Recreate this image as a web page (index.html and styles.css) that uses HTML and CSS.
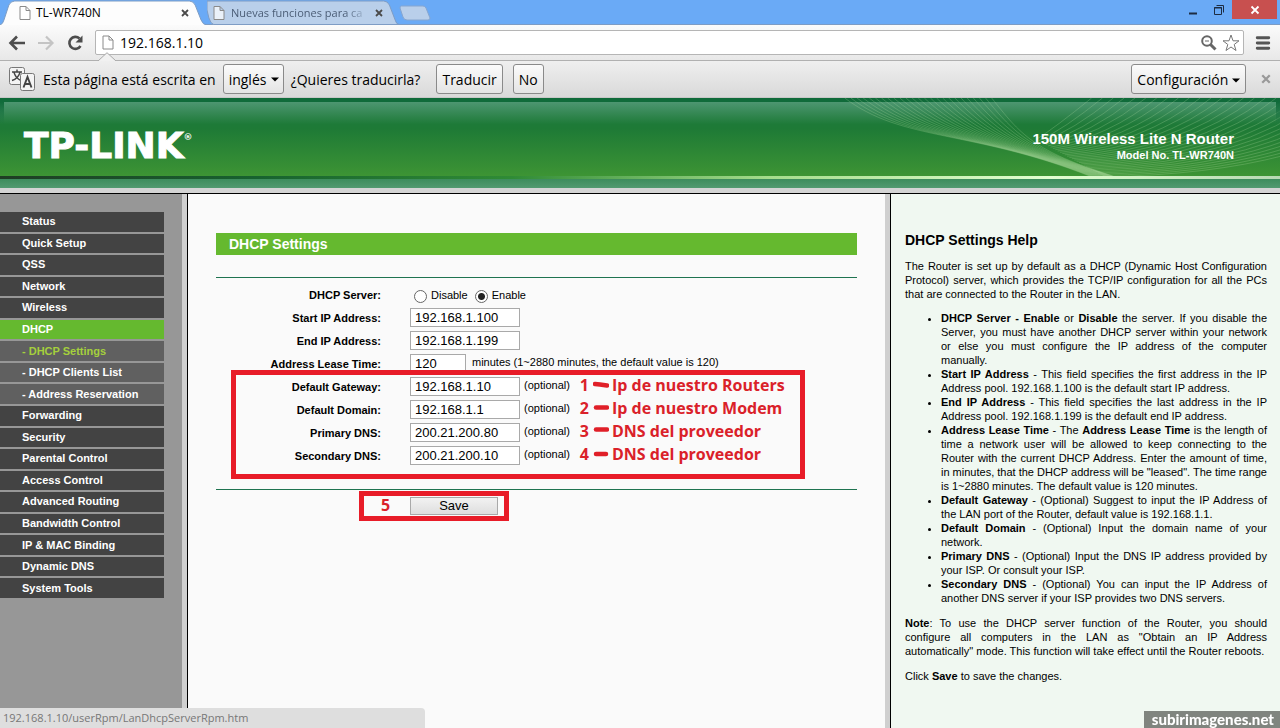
FILE: index.html
```html
<!DOCTYPE html>
<html lang="es">
<head>
<meta charset="utf-8">
<title>TL-WR740N</title>
<link rel="stylesheet" href="styles.css">
</head>
<body>
<svg class="defs" aria-hidden="true">
  <symbol id="page" viewBox="0 0 12 14"><path d="M1 .5h6l4 4v9H1zM7 .5v4h4" fill="#fff" fill-opacity=".7" stroke="#8a8a8a"/></symbol>
  <symbol id="x" viewBox="0 0 8 8"><path d="M1 1l6 6M7 1L1 7" fill="none" stroke="currentColor" stroke-width="1.8"/></symbol>
  <symbol id="caret" viewBox="0 0 8 5"><path d="M0 .5h8l-4 4z"/></symbol>
</svg>

<header class="titlebar">
  <div class="tab tab-active">
    <svg class="tab-shape" viewBox="0 0 210 25" preserveAspectRatio="none"><path d="M0 25Q3 24 4 20L9 5Q11 1 15 1H192Q196 1 198 5L204 20Q206 25 210 25" fill="#fdfdfd" stroke="#7d9cc4"/></svg>
    <svg class="tab-icon"><use href="#page"/></svg>
    <span class="tab-title">TL-WR740N</span>
    <button class="tab-close" aria-label="Cerrar pestaña"><svg><use href="#x"/></svg></button>
  </div>
  <div class="tab tab-back">
    <svg class="tab-shape" viewBox="0 0 200 25" preserveAspectRatio="none"><path d="M0 1H184Q188 1 190 5L196 20Q197 24 200 24.500H7Q4 24 2 18L0 10Z" fill="#b9cfea" stroke="#7d9cc4"/></svg>
    <svg class="tab-icon"><use href="#page"/></svg>
    <span class="tab-title fade">Nuevas funciones para ca</span>
    <button class="tab-close" aria-label="Cerrar pestaña"><svg><use href="#x"/></svg></button>
  </div>
  <button class="new-tab" aria-label="Nueva pestaña"><svg viewBox="0 0 32 16"><path d="M2.500 1H24Q26 1 27 3L31 13Q31 15 29 15H8Q5 15 4 12L1 3Q1 1 2.500 1Z" fill="#b9cfea" stroke="#86a6d0"/></svg></button>
  <div class="window-controls">
    <button class="win" aria-label="Minimizar"><svg viewBox="0 0 12 12"><path d="M2 9.500h8" stroke="#1d2c42" stroke-width="2"/></svg></button>
    <button class="win" aria-label="Restaurar"><svg viewBox="0 0 12 12"><path d="M1.500 3.500h7v7h-7zM1 4h8M3.500 1.500h7v7" fill="none" stroke="#1d2c42"/></svg></button>
    <button class="win win-close" aria-label="Cerrar"><svg viewBox="0 0 12 12"><path d="M2.500 2.500l7 7M9.500 2.500l-7 7" stroke="#fff" stroke-width="1.800"/></svg></button>
  </div>
</header>

<div class="toolbar">
  <button class="tool" aria-label="Atrás"><svg viewBox="0 0 18 18"><path d="M17 9H3M9 2.500L2.500 9 9 15.500" fill="none" stroke="#4d4d4d" stroke-width="2.600"/></svg></button>
  <button class="tool" aria-label="Adelante"><svg viewBox="0 0 18 18"><path d="M1 9h14M9 2.500L15.500 9 9 15.500" fill="none" stroke="#c4c4c4" stroke-width="2.200"/></svg></button>
  <button class="tool" aria-label="Recargar"><svg viewBox="0 0 18 18"><path d="M14.500 12A6 6 0 1 1 13.500 4.500" fill="none" stroke="#4d4d4d" stroke-width="2.600"/><path d="M16.500 1.500v7h-7z" fill="#4d4d4d"/></svg></button>
  <div class="omnibox">
    <svg class="omni-page"><use href="#page"/></svg>
    <input class="url" type="text" value="192.168.1.10" aria-label="Dirección">
    <svg class="omni-icon" viewBox="0 0 18 18"><circle cx="7" cy="7" r="4.800" fill="none" stroke="#666" stroke-width="2"/><path d="M5 7h4" stroke="#666"/><path d="M10.500 10.500l5 5" stroke="#666" stroke-width="3"/></svg>
    <svg class="omni-icon" viewBox="0 0 18 18"><path d="M9 1l2 5.800h6l-4.800 3.700 1.800 6L9 13l-5 3.500 1.800-6L1 6.800h6z" fill="#fff" stroke="#777"/></svg>
  </div>
  <button class="menu-button" aria-label="Menú"><svg viewBox="0 0 14 14"><path d="M2 2.500h10M2 7h10M2 11.500h10" stroke="#555" stroke-width="2.600" stroke-linecap="round"/></svg></button>
</div>

<div class="infobar">
  <svg class="infobar-notch" viewBox="0 0 18 9"><path d="M0 9L9 0.700 18 9" fill="#f1f1f1" stroke="#a9a9a9"/></svg>
  <svg class="translate-icon" viewBox="0 0 28 26"><rect x="1.500" y="1.500" width="15" height="17" rx="2" fill="#f4f4f4" stroke="#777"/><path d="M4 6h10M9 3.500V6M6 6.500q2 6 7 8M12 6.500q-2 6-8 8" fill="none" stroke="#444" stroke-width="1.400"/><rect x="12.500" y="7.500" width="14" height="17" rx="2" fill="#f4f4f4" stroke="#777"/><path d="M15.500 21.500L19.500 11l4 10.500M17 18h5" fill="none" stroke="#444" stroke-width="1.900"/></svg>
  <label for="lang">Esta página está escrita en</label>
  <span class="select-wrap"><select id="lang" class="chrome-button lang"><option>inglés</option></select><svg class="caret"><use href="#caret"/></svg></span>
  <span class="question">¿Quieres traducirla?</span>
  <button class="chrome-button">Traducir</button>
  <button class="chrome-button">No</button>
  <button class="chrome-button config">Configuración <svg class="caret"><use href="#caret"/></svg></button>
  <button class="infobar-close" aria-label="Cerrar barra"><svg><use href="#x"/></svg></button>
</div>

<div class="banner">
  <svg class="waves" id="waves" viewBox="0 0 440 79" aria-hidden="true"></svg>
  <div class="logo">TP-LINK<sup>®</sup></div>
  <div class="product">
    <div class="product-name">150M Wireless Lite N Router</div>
    <div class="product-model">Model No. TL-WR740N</div>
  </div>
</div>
<div class="banner-line"></div>
<div class="banner-foot"></div>

<div class="frames">
  <nav class="sidebar">
    <ul class="menu">
      <li><a href="#">Status</a></li>
      <li><a href="#">Quick Setup</a></li>
      <li><a href="#">QSS</a></li>
      <li><a href="#">Network</a></li>
      <li><a href="#">Wireless</a></li>
      <li><a href="#" class="current">DHCP</a></li>
      <li><a href="#" class="sub sub-current">- DHCP Settings</a></li>
      <li><a href="#" class="sub">- DHCP Clients List</a></li>
      <li><a href="#" class="sub">- Address Reservation</a></li>
      <li><a href="#">Forwarding</a></li>
      <li><a href="#">Security</a></li>
      <li><a href="#">Parental Control</a></li>
      <li><a href="#">Access Control</a></li>
      <li><a href="#">Advanced Routing</a></li>
      <li><a href="#">Bandwidth Control</a></li>
      <li><a href="#">IP &amp; MAC Binding</a></li>
      <li><a href="#">Dynamic DNS</a></li>
      <li><a href="#">System Tools</a></li>
    </ul>
  </nav>

  <main class="content">
    <h1>DHCP Settings</h1>
    <form>
      <div class="fields">
        <div class="row" role="radiogroup" aria-labelledby="srv">
          <span class="name" id="srv">DHCP Server:</span>
          <div class="field">
            <label class="choice"><input type="radio" name="dhcp"><span>Disable</span></label>
            <label class="choice"><input type="radio" name="dhcp" checked><span>Enable</span></label>
          </div>
        </div>
        <div class="row"><label class="name" for="start">Start IP Address:</label><div class="field"><input class="box" id="start" type="text" value="192.168.1.100"></div></div>
        <div class="row"><label class="name" for="end">End IP Address:</label><div class="field"><input class="box" id="end" type="text" value="192.168.1.199"></div></div>
        <div class="row"><label class="name" for="lease">Address Lease Time:</label><div class="field"><input class="box short" id="lease" type="text" value="120"><span class="hint lease-hint">minutes (1~2880 minutes, the default value is 120)</span></div></div>
        <div class="marked">
          <div class="row"><label class="name" for="gw">Default Gateway:</label><div class="field"><input class="box" id="gw" type="text" value="192.168.1.10"><span class="hint">(optional)</span><span class="note"><b>1</b><svg viewBox="0 0 16 8"><path d="M2 3l5 .5 7 1" stroke="#e01f28" stroke-width="4.500" stroke-linecap="round" fill="none"/></svg>Ip de nuestro Routers</span></div></div>
          <div class="row"><label class="name" for="dom">Default Domain:</label><div class="field"><input class="box" id="dom" type="text" value="192.168.1.1"><span class="hint">(optional)</span><span class="note"><b>2</b><svg viewBox="0 0 16 8"><path d="M3 3.500h11" stroke="#e01f28" stroke-width="4.500" stroke-linecap="round"/></svg>Ip de nuestro Modem</span></div></div>
          <div class="row"><label class="name" for="dns1">Primary DNS:</label><div class="field"><input class="box" id="dns1" type="text" value="200.21.200.80"><span class="hint">(optional)</span><span class="note"><b>3</b><svg viewBox="0 0 16 8"><path d="M3 2.500h11" stroke="#e01f28" stroke-width="4.500" stroke-linecap="round"/></svg>DNS del proveedor</span></div></div>
          <div class="row"><label class="name" for="dns2">Secondary DNS:</label><div class="field"><input class="box" id="dns2" type="text" value="200.21.200.10"><span class="hint">(optional)</span><span class="note"><b>4</b><svg viewBox="0 0 16 8"><path d="M3 4h10" stroke="#e01f28" stroke-width="4.500" stroke-linecap="round"/></svg>DNS del proveedor</span></div></div>
          <div class="frame frame-fields"></div>
        </div>
      </div>
      <div class="actions">
        <button class="save" type="button">Save</button>
        <div class="frame frame-save"><b>5</b></div>
      </div>
    </form>
  </main>

  <aside class="help" lang="en">
    <h2>DHCP Settings Help</h2>
    <p>The Router is set up by default as a DHCP (Dynamic Host Configuration Protocol) server, which provides the TCP/IP configuration for all the PCs that are connected to the Router in the LAN.</p>
    <ul>
      <li><b>DHCP Server - Enable</b> or <b>Disable</b> the server. If you disable the Server, you must have another DHCP server within your network or else you must configure the IP address of the computer manually.</li>
      <li><b>Start IP Address</b> - This field specifies the first address in the IP Address pool. 192.168.1.100 is the default start IP address.</li>
      <li><b>End IP Address</b> - This field specifies the last address in the IP Address pool. 192.168.1.199 is the default end IP address.</li>
      <li><b>Address Lease Time</b> - The <b>Address Lease Time</b> is the length of time a network user will be allowed to keep connecting to the Router with the current DHCP Address. Enter the amount of time, in minutes, that the DHCP address will be "leased". The time range is 1~2880 minutes. The default value is 120 minutes.</li>
      <li><b>Default Gateway</b> - (Optional) Suggest to input the IP Address of the LAN port of the Router, default value is 192.168.1.1.</li>
      <li><b>Default Domain</b> - (Optional) Input the domain name of your network.</li>
      <li><b>Primary DNS</b> - (Optional) Input the DNS IP address provided by your ISP. Or consult your ISP.</li>
      <li><b>Secondary DNS</b> - (Optional) You can input the IP Address of another DNS server if your ISP provides two DNS servers.</li>
    </ul>
    <p><b>Note</b>: To use the DHCP server function of the Router, you should configure all computers in the LAN as "Obtain an IP Address automatically" mode. This function will take effect until the Router reboots.</p>
    <p>Click <b>Save</b> to save the changes.</p>
  </aside>
</div>

<div class="status">192.168.1.10/userRpm/LanDhcpServerRpm.htm</div>
<div class="watermark">subirimagenes.net</div>
<script src="waves.js"></script>
</body>
</html>
```
FILE: waves.js
```js
// Two families of fine curves that cross in the right half of the banner.
var out = '';
for (var i = 0; i < 25; i++) {
  out += '<path d="M' + (2 + 6.2 * i) + ' 0C' + (60 + 5 * i) + ' ' + (44 - 0.3 * i) + ' ' + (130 + 2.6 * i) + ' ' + (32 + 0.9 * i) + ' ' + (250 + i) + ' 79"/>';
}
for (var j = 0; j < 30; j++) {
  out += '<path d="M' + (252 + 11 * j) + ' 0Q' + (215 + 9 * j) + ' ' + (30 + 1.6 * j) + ' ' + (196 + 2.4 * j) + ' ' + (42 + 1.3 * j) + '"/>';
}
document.getElementById('waves').innerHTML = out;
```
FILE: styles.css
```css
* { box-sizing: border-box; }
body {
  margin: 0;
  min-height: 100vh;
  display: flex;
  flex-direction: column;
  font-family: "Liberation Sans", Arial, sans-serif;
  font-size: 11px;
  color: #000;
  background: #fafafa;
}
button, input, select { font: inherit; color: inherit; margin: 0; }
button { padding: 0; border: 0; background: none; }
svg { display: block; flex: none; }
.defs { display: none; }

.titlebar, .toolbar, .infobar, .status { font-family: "Open Sans", "Noto Sans", sans-serif; }

.titlebar {
  display: flex;
  height: 25px;
  background: #6aaaf6;
  border-bottom: 1px solid #7d9cc4;
}
.tab {
  position: relative;
  display: flex;
  align-items: center;
  height: 25px;
  font-size: 12px;
}
.tab-active { width: 207px; padding: 0 18px 0 19px; z-index: 1; }
.tab-back { width: 192px; padding: 0 16px 0 6px; font-size: 11px; color: #4b5d76; }
.tab-shape { position: absolute; left: 0; top: 0; width: 100%; height: 25px; z-index: -1; }
.tab-back .tab-shape { z-index: 0; }
.tab-back > :not(.tab-shape) { position: relative; }
.tab-icon { width: 12px; height: 14px; }
.tab-title { flex: 1; margin: 0 5px; white-space: nowrap; }
.tab-back .tab-title { margin-left: 6px; }
.fade { mask-image: linear-gradient(90deg, #000 82%, transparent); }
.tab-close { width: 8px; height: 8px; color: #4a4a4a; }
.tab-close svg { width: 8px; height: 8px; }
.new-tab { width: 32px; height: 16px; margin-top: 5px; }
.window-controls { display: flex; margin-left: auto; padding-right: 3px; }
.win { width: 26px; height: 19px; display: flex; align-items: center; justify-content: center; }
.win svg { width: 12px; height: 12px; }
.win-close { width: 45px; background: #c8504f; }

.toolbar {
  display: flex;
  align-items: center;
  gap: 11px;
  height: 36px;
  padding: 0 9px 0 8px;
  background: linear-gradient(#fbfbfb, #e8e8e8);
  border-bottom: 1px solid #b0b0b0;
}
.tool svg { width: 18px; height: 18px; }
.omnibox {
  flex: 1;
  display: flex;
  align-items: center;
  height: 25px;
  padding: 0 3px 0 6px;
  background: #fff;
  border: 1px solid #b5b5b5;
  border-radius: 2px;
}
.omni-page { width: 12px; height: 15px; }
.url { flex: 1; min-width: 0; border: 0; padding: 0 6px; background: none; font-size: 14px; outline: 0; }
.omni-icon { width: 18px; height: 18px; margin-left: 4px; }
.menu-button svg { width: 16px; height: 16px; }

.infobar {
  position: relative;
  display: flex;
  align-items: center;
  height: 37px;
  padding: 0 9px 0 8px;
  font-size: 14px;
  background: linear-gradient(#efefef, #d9d9d9);
  border-bottom: 1px solid #c8c8c8;
}
.infobar-notch { position: absolute; left: 98px; top: -9px; width: 18px; height: 9px; }
.translate-icon { width: 28px; height: 26px; margin-right: 7px; }
.select-wrap { position: relative; margin: 0 7px; }
.select-wrap .caret { position: absolute; right: 5px; top: 13px; pointer-events: none; }
.caret { display: inline-block; width: 8px; height: 5px; vertical-align: 2px; }
.chrome-button {
  height: 30px;
  padding: 0 5px;
  border: 1px solid #8a8a8a;
  border-radius: 3px;
  background: linear-gradient(#fbfbfb, #e4e4e4);
}
.chrome-button + .chrome-button { margin-left: 10px; }
.lang { appearance: none; width: 61px; }
.question { margin-right: 16px; }
.infobar .config { margin-left: auto; }
.infobar-close { width: 10px; height: 10px; margin-left: 15px; color: #999; }
.infobar-close svg { width: 10px; height: 10px; }

.banner {
  position: relative;
  display: flex;
  align-items: center;
  justify-content: space-between;
  height: 78px;
  padding: 14px 46px 0 24px;
  color: #fff;
  background: linear-gradient(#4d9671, #1e7a38 30%, #1e7a36 36%, #3d9434);
  border-top: 4px solid #106b3a;
}
.banner::before, .banner::after {
  content: "";
  position: absolute;
  left: 0;
  top: 0;
  width: 4px;
  height: 22px;
  background: linear-gradient(#106b3a, transparent);
}
.banner::after { left: auto; right: 0; }
.waves { position: absolute; right: 0; top: -4px; width: 440px; height: 78px; fill: none; stroke: #bfe5b0; stroke-opacity: .24; stroke-width: 1; }
.logo {
  display: flex;
  font: bold 36px/36px "DejaVu Sans", Verdana, sans-serif;
  -webkit-text-stroke: 1px #fff;
}
.logo sup { font-size: 9px; line-height: 18px; -webkit-text-stroke: 0; }
.product { position: relative; text-align: right; font-weight: bold; }
.product-name { font-size: 15px; line-height: 18px; }
.product-model { font-size: 11px; line-height: 14px; }
.banner-line { height: 3px; background: linear-gradient(90deg, #1f3d24, #17622f 20%, #2f8b35 40%, #a5dc8c 60%, #e2ffd0 82%, #b7d9b3); }
.banner-foot { height: 15px; background: linear-gradient(#3d8c5c, #529a70 9px, #d4d4d4 9px); border-bottom: 1px solid #000; }

.frames { flex: 1; display: flex; }
.sidebar {
  width: 188px;
  padding-top: 18px;
  background: #979797;
  border-right: 1px solid #000;
  box-shadow: inset -5px 0 #d0d0d0;
}
.menu {
  display: grid;
  grid-auto-rows: 1fr;
  gap: 2px;
  min-height: 386px;
  width: 164px;
  margin: 0;
  padding: 0;
  list-style: none;
}
.menu a {
  display: flex;
  align-items: center;
  height: 100%;
  padding: 0 0 1px 22px;
  font-weight: bold;
  color: #fff;
  text-decoration: none;
  background: #434343;
}
.menu .current { background: #65b92f; }
.menu .sub { background: #606060; }
.menu .sub-current { color: #a5d03c; }

.content { flex: 1; margin-right: 5px; padding: 39px 28px 0; background: #fafafa; }
h1 {
  margin: 0 0 22px;
  padding-left: 13px;
  font-size: 14px;
  line-height: 22px;
  color: #fff;
  background: #65b92f;
}
.fields { padding: 5px 0 22px; border: solid #1f7350; border-width: 1px 0; }
.row { display: grid; grid-template-columns: 165px 1fr; column-gap: 29px; align-items: center; height: 23px; }
.name { text-align: right; font-weight: bold; }
.field { display: flex; align-items: center; height: 23px; white-space: nowrap; }
.choice { display: flex; align-items: center; margin-right: 7px; }
.choice input {
  appearance: none;
  width: 13px;
  height: 13px;
  margin: 3px 4px 0 4px;
  border: 1px solid #666;
  border-radius: 50%;
  background: #fff;
}
.choice + .choice input { margin-left: 0; }
.choice input:checked { background: radial-gradient(circle, #222 3px, #fff 4px); }
.box {
  width: 110px;
  height: 19px;
  padding: 0 4px;
  border: 1px solid #a9a9a9;
  border-radius: 0;
  background: #fff;
  font-size: 13px;
}
.short { width: 56px; }
.hint { margin-left: 4px; padding-bottom: 3px; }
.lease-hint { margin-left: 6px; }
.marked { position: relative; }
.note, .frame b { font: bold 16px/20px "Open Sans", "Noto Sans", sans-serif; color: #da2129; }
.note { display: flex; align-items: center; margin-left: 10px; padding-bottom: 3px; }
.note b { font-weight: 700; }
.note svg { width: 16px; height: 8px; margin: 0 3px 0 4px; }
.frame { position: absolute; border: 5px solid #e81c28; pointer-events: none; }
.frame-fields { left: 15px; top: -5px; width: 574px; height: 109px; }
.actions { position: relative; padding: 7px 0 0 194px; }
.save {
  display: block;
  width: 88px;
  height: 18px;
  border: 1px solid #a9a9a9;
  background: linear-gradient(#f2f2f2, #dedede);
  font-size: 13px;
  line-height: 16px;
}
.frame-save { left: 143px; top: 1px; width: 150px; height: 30px; padding-left: 17px; }
.frame-save b { display: block; line-height: 18px; }

.help {
  width: 390px;
  padding: 38px 13px 0 14px;
  background: #f0f8f1;
  border-left: 1px solid #000;
  box-shadow: -5px 0 #cfcfcf;
  line-height: 14px;
  text-align: justify;
}
.help h2 { margin: 0 0 11px; font-size: 14px; line-height: 16px; }
.help p { margin: 0 0 11px; }
.help h2 + p { margin-bottom: 10px; }
.help ul { margin: 0 0 11px; padding-left: 36px; }

.status {
  position: fixed;
  left: 0;
  bottom: 0;
  width: 425px;
  padding-left: 3px;
  font-size: 11px;
  line-height: 20px;
  color: #777;
  background: #dedede;
  border-radius: 0 4px 0 0;
}
.watermark {
  position: fixed;
  right: 0;
  bottom: 0;
  padding: 0 6px 0 8px;
  font: 900 15px/17px Lato, sans-serif;
  color: #fff;
  background: #80857f;
}
```
